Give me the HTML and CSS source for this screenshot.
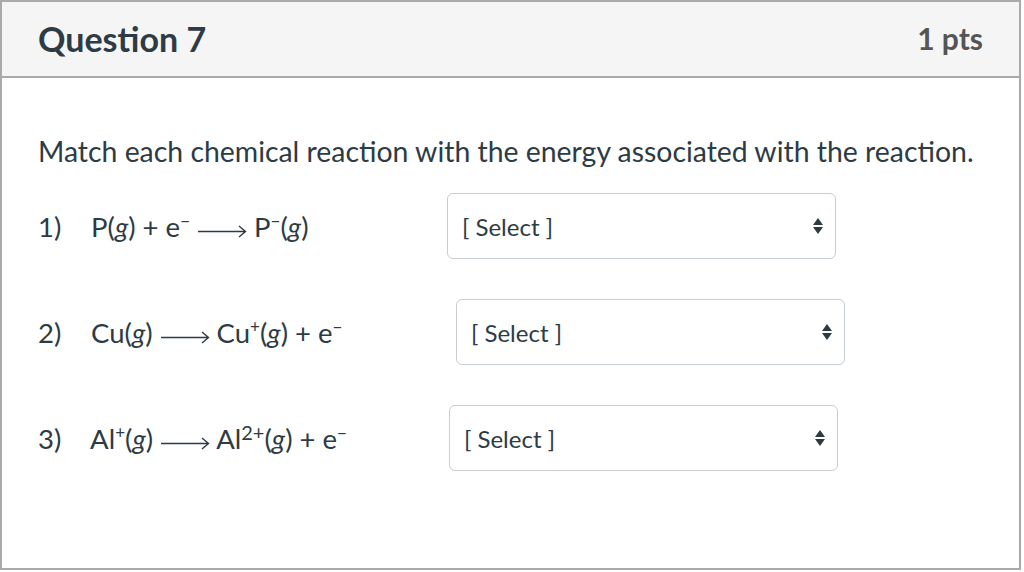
FILE: index.html
```html
<!DOCTYPE html>
<html lang="en">
<head>
  <meta charset="UTF-8">
  <title>Question 7</title>
  <link rel="stylesheet" href="styles.css">
</head>
<body>

  <div class="question">
    <div class="header">
      <h2>Question 7</h2>
      <span class="points">1 pts</span>
    </div>

    <div class="content">
      <p class="prompt">Match each chemical reaction with the energy associated with the reaction.</p>

      <div class="row row-1">
        <div class="reaction">
          <span class="num">1)</span>
          P(<i>g</i>) + e<sup>&minus;</sup>
          <svg class="arrow" width="50" height="14" viewBox="0 0 50 14"><path d="M1 7.5H48M42 2L48.5 7.5L42 13" fill="none" stroke="#2d3b45" stroke-width="1.4"/></svg>
          P<sup>&minus;</sup>(<i>g</i>)
        </div>
        <div class="select-wrap">
          <select><option>[ Select ]</option></select>
          <svg class="caret" width="10" height="18" viewBox="0 0 10 18"><path d="M5 1L10 8H0Z M0 10H10L5 17Z" fill="#2d3b45"/></svg>
        </div>
      </div>

      <div class="row row-2">
        <div class="reaction">
          <span class="num">2)</span>
          Cu(<i>g</i>)
          <svg class="arrow" width="50" height="14" viewBox="0 0 50 14"><path d="M1 7.5H48M42 2L48.5 7.5L42 13" fill="none" stroke="#2d3b45" stroke-width="1.4"/></svg>
          Cu<sup>+</sup>(<i>g</i>) + e<sup>&minus;</sup>
        </div>
        <div class="select-wrap">
          <select><option>[ Select ]</option></select>
          <svg class="caret" width="10" height="18" viewBox="0 0 10 18"><path d="M5 1L10 8H0Z M0 10H10L5 17Z" fill="#2d3b45"/></svg>
        </div>
      </div>

      <div class="row row-3">
        <div class="reaction">
          <span class="num">3)</span>
          Al<sup>+</sup>(<i>g</i>)
          <svg class="arrow" width="50" height="14" viewBox="0 0 50 14"><path d="M1 7.5H48M42 2L48.5 7.5L42 13" fill="none" stroke="#2d3b45" stroke-width="1.4"/></svg>
          Al<sup class="big">2+</sup>(<i>g</i>) + e<sup>&minus;</sup>
        </div>
        <div class="select-wrap">
          <select><option>[ Select ]</option></select>
          <svg class="caret" width="10" height="18" viewBox="0 0 10 18"><path d="M5 1L10 8H0Z M0 10H10L5 17Z" fill="#2d3b45"/></svg>
        </div>
      </div>
    </div>
  </div>

</body>
</html>
```

FILE: styles.css
```css
* {
  box-sizing: border-box;
  margin: 0;
  padding: 0;
}

body {
  font-family: Lato, 'Open Sans', sans-serif;
  color: #2d3b45;
  background: #fff;
}

.question {
  width: 1021px;
  height: 570px;
  border: 2px solid #aaaaaa;
}

.header {
  height: 76px;
  background: #f5f5f5;
  border-bottom: 2px solid #aaaaaa;
  display: flex;
  align-items: center;
  justify-content: space-between;
  padding: 0 36px 2px 36px;
}

.header h2 {
  font-size: 34px;
  font-weight: 700;
  color: #2d3b45;
}

.points {
  font-size: 30px;
  font-weight: 700;
  color: #555;
}

.content {
  padding: 55px 36px 0 36px;
}

.prompt {
  font-size: 28.4px;
  line-height: 36px;
  margin-bottom: 24px;
}

.row {
  display: flex;
  align-items: center;
  height: 66px;
  margin-bottom: 40px;
}

.reaction {
  width: 409px;
  font-size: 27.5px;
  white-space: nowrap;
}

.num {
  display: inline-block;
  width: 46px;
}

.reaction i {
  font-style: italic;
}

.reaction sup {
  font-size: 17px;
  vertical-align: 10px;
  line-height: 0;
}

.reaction sup.big {
  font-size: 20px;
  vertical-align: 9px;
}

.arrow {
  vertical-align: -1px;
}

.row-2 .select-wrap {
  margin-left: 9px;
}

.row-3 .select-wrap {
  margin-left: 2px;
}

.select-wrap {
  position: relative;
  width: 389px;
  height: 66px;
}

.select-wrap select {
  appearance: none;
  width: 100%;
  height: 100%;
  border: 1px solid #c7cdd1;
  border-radius: 6px;
  background: #fff;
  font-family: Lato, sans-serif;
  font-size: 24px;
  color: #2d3b45;
  padding: 0 14px;
}

.caret {
  position: absolute;
  right: 13px;
  top: 24px;
}
```
